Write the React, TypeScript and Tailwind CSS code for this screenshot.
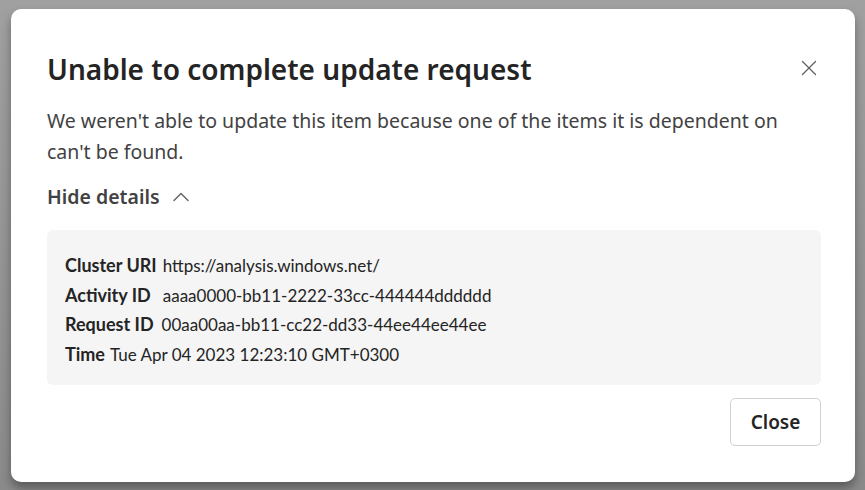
import { X, ChevronUp } from "lucide-react"

const details = [
    { label: "Cluster URI", value: "https://analysis.windows.net/", gap: "ml-[6px]" },
    { label: "Activity ID", value: "aaaa0000-bb11-2222-33cc-444444dddddd", gap: "ml-[12px]" },
    { label: "Request ID", value: "00aa00aa-bb11-cc22-dd33-44ee44ee44ee", gap: "ml-[8px]" },
    { label: "Time", value: "Tue Apr 04 2023 12:23:10 GMT+0300", gap: "ml-[5px]" },
]

export default function App() {
    return (
        <div className="w-[865px] h-[490px] bg-[linear-gradient(180deg,#a0a0a0_0%,#8a8a8a_100%)] pt-[9px] pl-[11px] font-['Noto_Sans',sans-serif]">
            <div className="w-[844px] h-[473px] bg-white rounded-[10px] shadow-[0_6px_10px_rgba(0,0,0,0.35)] flex flex-col pl-[36px] pr-[34px] pt-[42px]">
                <div className="flex justify-between items-start">
                    <h1 className="text-[28px] leading-[36px] font-semibold text-[#242424]">
                        Unable to complete update request
                    </h1>
                    <button className="mt-[4px] -mr-[1px] text-[#616161]">
                        <X size={26} strokeWidth={1.2} />
                    </button>
                </div>
                <p className="mt-[18px] max-w-[750px] text-[19.5px] leading-[31px] text-[#424242]">
                    We weren't able to update this item because one of the items it is dependent on can't be found.
                </p>
                <div className="mt-[16px] flex items-center gap-[7px] text-[19.5px] leading-[28px] font-semibold text-[#424242]">
                    <span>Hide details</span>
                    <ChevronUp size={28} strokeWidth={1.2} className="text-[#616161]" />
                </div>
                <div className="mt-[19px] bg-[#f5f5f5] rounded-[6px] h-[155px] px-[18px] pt-[21px] flex flex-col text-[17px] leading-[29.5px] text-[#242424] font-['Lato',sans-serif]">
                    {details.map((row) => (
                        <div key={row.label} className="flex items-baseline">
                            <span className="font-bold text-[18px]">{row.label}</span>
                            <span className={row.gap}>{row.value}</span>
                        </div>
                    ))}
                </div>
                <div className="mt-[13px] flex justify-end">
                    <button className="w-[91px] h-[48px] rounded-[5px] border border-[#d1d1d1] bg-white text-[19px] font-semibold text-[#242424]">
                        Close
                    </button>
                </div>
            </div>
        </div>
    )
}
